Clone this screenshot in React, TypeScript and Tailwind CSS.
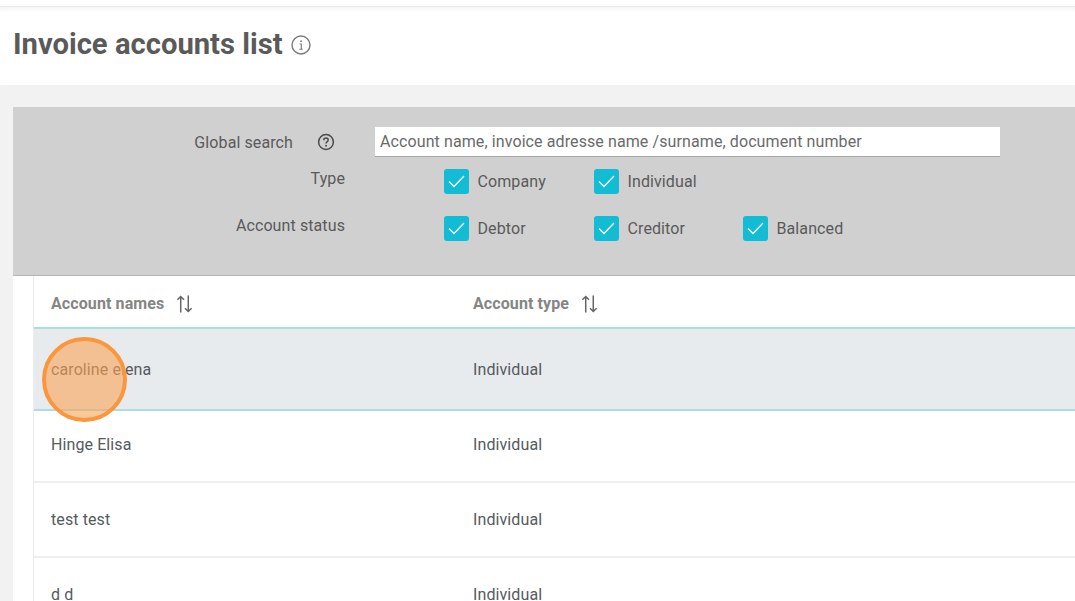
const font = "font-['Roboto',sans-serif]";

const InfoIcon = () => (
  <svg width="20" height="20" viewBox="0 0 20 20" fill="none" stroke="#7a7a7a">
    <circle cx="10" cy="10" r="9" strokeWidth="1.4" />
    <circle cx="10" cy="6.200" r="0.9" fill="#7a7a7a" stroke="none" />
    <path d="M8.600 9h1.700v5M8.400 14.200h3.400" strokeWidth="1.1" />
  </svg>
);

const HelpIcon = () => (
  <svg width="18" height="18" viewBox="0 0 18 18" fill="none" stroke="#4a4a4a">
    <circle cx="9" cy="9" r="7.400" strokeWidth="1.500" />
    <path d="M6.800 7.200c0-1.300 1-2.100 2.200-2.100s2.200.8 2.200 2c0 1.900-2.200 1.700-2.200 3.400" strokeWidth="1.500" />
    <circle cx="9" cy="12.700" r="0.95" fill="#4a4a4a" stroke="none" />
  </svg>
);

const SortIcon = () => (
  <svg width="17" height="20" viewBox="0 0 18 20" fill="none" stroke="#666" strokeWidth="1.600">
    <path d="M5 19V2M1.500 5.500 5 2l3.500 3.500" />
    <path d="M13 1v17M9.500 14.500 13 18l3.500-3.500" />
  </svg>
);

const Check = ({ label, width }: { label: string; width: string }) => (
  <label className={`flex items-center gap-[8.500px] ${width}`}>
    <span className="flex h-[25px] w-[25px] shrink-0 items-center justify-center rounded-[3px] bg-[#12bcd4]">
      <svg width="17" height="13" viewBox="0 0 17 13" fill="none" stroke="#fff" strokeWidth="1.300">
        <path d="M1 6.500 6 11.500 16 1" />
      </svg>
    </span>
    <span className="text-base tracking-[0.1px] text-[#5a5a5a]">{label}</span>
  </label>
);

const rows = [
  { name: 'caroline elena', h: 'h-[82px] pt-[2px]', cls: 'bg-[#e8ebee] border-b-[#a9dfe3]' },
  { name: 'Hinge Elisa', h: 'h-[72px] pb-[2px]', cls: 'border-b-[#efefef]' },
  { name: 'test test', h: 'h-[75px]', cls: 'border-b-[#efefef]' },
  { name: 'd d', h: 'h-[75px]', cls: 'border-b-[#efefef]' },
];

export default function App() {
  return (
    <div className={`${font} relative h-[601px] w-[1075px] overflow-hidden bg-[#f2f2f2]`}>
      <div className="h-[6px] bg-white" />
      <div className="flex h-[79px] items-center gap-2 border-t border-[#ececec] bg-white pb-[2px] pl-[13px] shadow-[inset_0_5px_5px_-3px_rgba(0,0,0,0.05)]">
        <h1 className="text-[29.200px] font-bold text-[#5a5a5a]">Invoice accounts list</h1>
        <InfoIcon />
      </div>
      <div className="pl-[13px] pt-[22px]">
        <div className="h-[169px] border-b border-[#b5b5b5] bg-[#d0d0d0] pt-[20px]">
          <div className="flex h-[30px] items-center">
            <span className="mt-[2px] w-[280px] text-right text-base tracking-[0.1px] text-[#5a5a5a]">Global search</span>
            <span className="ml-[24px] flex w-[18px] justify-center"><HelpIcon /></span>
            <div className="ml-[40px] flex h-[30px] w-[625px] items-center border-b border-[#a8a8a8] bg-white pl-[5px] text-base tracking-[0.1px] text-[#6a6a6a]">
              Account name, invoice adresse name /surname, document number
            </div>
          </div>
          <div className="mt-[12px] flex h-[25px] items-center">
            <span className="mb-[6px] w-[332px] text-right text-base tracking-[0.1px] text-[#5a5a5a]">Type</span>
            <div className="ml-[99px] flex">
              <Check label="Company" width="w-[150px]" />
              <Check label="Individual" width="w-[149px]" />
            </div>
          </div>
          <div className="mt-[22px] flex h-[25px] items-center">
            <span className="mb-[6px] w-[332px] text-right text-base tracking-[0.1px] text-[#5a5a5a]">Account status</span>
            <div className="ml-[99px] flex">
              <Check label="Debtor" width="w-[150px]" />
              <Check label="Creditor" width="w-[149px]" />
              <Check label="Balanced" width="w-[120px]" />
            </div>
          </div>
        </div>
        <div className="bg-white pl-[20px]">
          <div className="border-l border-[#ececec]">
            <div className="flex h-[53px] items-center border-b-2 border-[#a9dfe3] pt-[5px] text-base font-bold tracking-[0.1px] text-[#858585]">
              <div className="flex w-[439px] items-center gap-[12px] pl-[17px]">
                Account names <SortIcon />
              </div>
              <div className="flex items-center gap-[12px]">
                Account type <SortIcon />
              </div>
            </div>
            {rows.map((r) => (
              <div key={r.name} className={`flex items-center border-b-2 text-base tracking-[0.1px] text-[#555a60] ${r.h} ${r.cls}`}>
                <div className="w-[439px] pl-[17px]">{r.name}</div>
                <div>Individual</div>
              </div>
            ))}
          </div>
        </div>
      </div>
      <div className="absolute left-[42px] top-[337px] h-[85px] w-[85px] rounded-full border-4 border-[#fa963c] bg-[#f8a455]/60" />
    </div>
  );
}
